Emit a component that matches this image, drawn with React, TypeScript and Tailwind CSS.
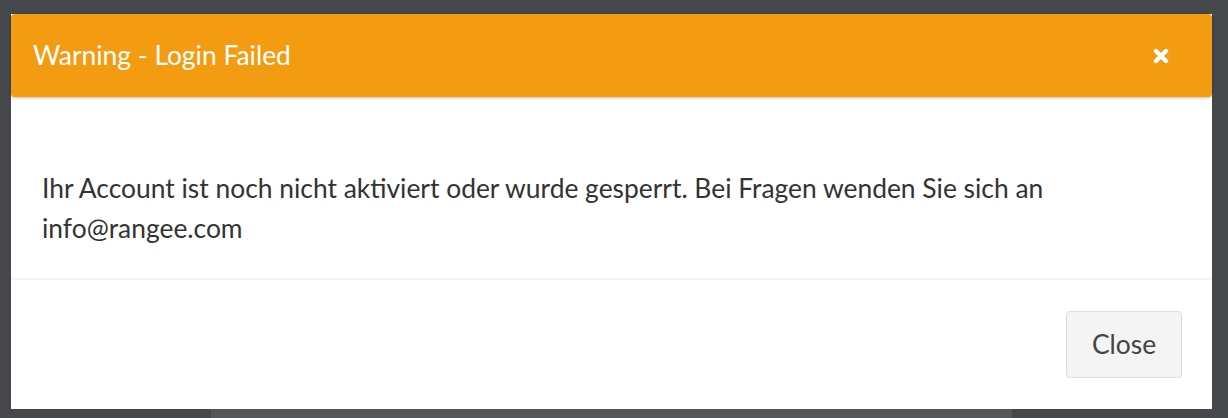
export default function App() {
  return (
    <div className="flex h-[418px] w-[1228px] flex-col bg-[#46474b] pl-[11px] pr-[16px] pt-[14px] font-['Lato',sans-serif]">
      <div className="flex flex-col bg-white">
        <div className="flex h-[83px] items-center justify-between rounded-[4px] bg-[#f39c12] pl-[22px] pr-[43px] shadow-[0_1px_3px_rgba(0,0,0,0.25)]">
          <h4 className="text-[26.4px] leading-none text-white">Warning - Login Failed</h4>
          <button className="text-white" aria-label="Close">
            <svg width="16" height="16" viewBox="0 0 16 16" aria-hidden="true">
              <path d="M3 3 L13 13 M13 3 L3 13" stroke="currentColor" strokeWidth="4.4" strokeLinecap="round" />
            </svg>
          </button>
        </div>
        <div className="h-[181px] px-[31px] pt-[71px] text-[26.4px] leading-[40px] text-[#333]">
          <p>Ihr Account ist noch nicht aktiviert oder wurde gesperrt. Bei Fragen wenden Sie sich an info@rangee.com</p>
        </div>
        <div className="flex justify-end border-t-2 border-[#f4f4f4] px-[30px] py-[31px]">
          <button className="h-[67px] w-[116px] rounded-[4px] border border-[#ddd] bg-[#f4f4f4] text-[26.4px] text-[#444]">
            Close
          </button>
        </div>
      </div>
      <div className="flex flex-1">
        <div className="w-[200px] bg-[#46474b]" />
        <div className="w-[801px] bg-[#555658]" />
        <div className="flex-1" />
      </div>
    </div>
  )
}
